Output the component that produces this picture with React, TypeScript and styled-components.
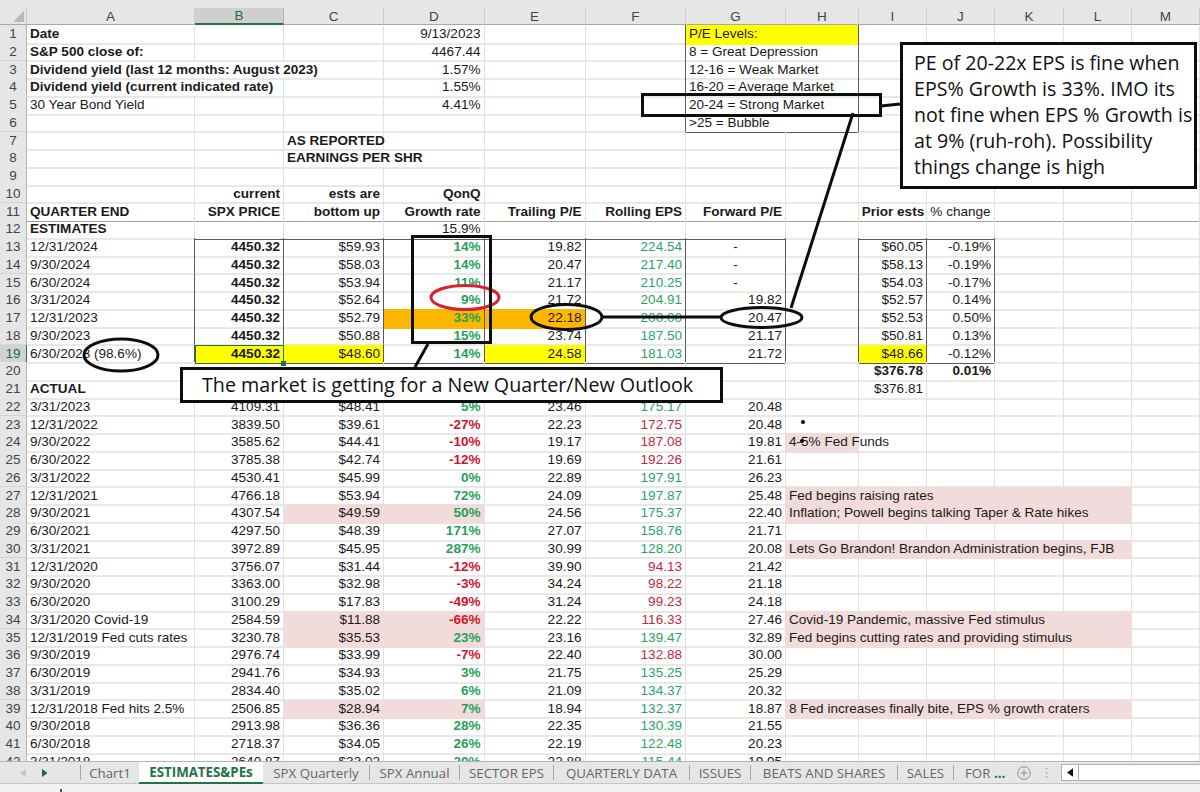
import React from "react";
import styled, { createGlobalStyle } from "styled-components";

const Global = createGlobalStyle`
  html, body { margin: 0; padding: 0; background: #fff; }
  #root { width: 1200px; height: 792px; overflow: hidden; }
`;

const COLS = "27px 168px 89px 100px 100.5px 101px 100.5px 100px 72.7px 68.3px 68px 69px 68px 68px";
const LETTERS = ["A", "B", "C", "D", "E", "F", "G", "H", "I", "J", "K", "L", "M"] as const;
type Col = (typeof LETTERS)[number];

const GREEN = "#1fa35c";
const RED = "#d0142c";
const FGREEN = "#2aa465";
const FRED = "#c42a3c";
const PINK = "#f2dcdb";
const YELLOW = "#ffff00";
const ORANGE = "#ffb600";

const Window = styled.div`
  position: relative;
  width: 1200px;
  height: 792px;
  overflow: hidden;
  display: flex;
  flex-direction: column;
  font-family: "Liberation Sans", Arial, sans-serif;
  color: #1a1a1a;
`;

const HeaderRow = styled.div`
  display: grid;
  grid-template-columns: ${COLS};
  height: 25px;
  box-sizing: border-box;
  padding-top: 8px;
  background: #e6e6e6;
  flex: none;
`;

const Corner = styled.div`
  position: relative;
  background: #e6e6e6;
  border-right: 1px solid #c8c8c8;
  border-bottom: 1px solid #a8a8a8;
  &::after {
    content: "";
    position: absolute;
    right: 2px;
    bottom: 2px;
    border-style: solid;
    border-width: 0 0 11px 11px;
    border-color: transparent transparent #b8b8b8 transparent;
  }
`;

const ColHead = styled.div<{ $selected?: boolean }>`
  display: flex;
  align-items: center;
  justify-content: center;
  font-size: 13.5px;
  box-sizing: border-box;
  color: ${(p) => (p.$selected ? "#1d6b44" : "#444")};
  background: ${(p) => (p.$selected ? "#cfcfcf" : "#e6e6e6")};
  border-right: 1px solid ${(p) => (p.$selected ? "#b0b0b0" : "#cdcdcd")};
  border-bottom: ${(p) => (p.$selected ? "2px solid #217346" : "1px solid #a8a8a8")};
`;

const Sheet = styled.div`
  flex: 1;
  min-height: 0;
  overflow: hidden;
  background: #fff;
`;

const Row = styled.div`
  display: grid;
  grid-template-columns: ${COLS};
  height: 17.75px;
  font-size: 13.55px;
  line-height: 17.5px;
`;

const RowNum = styled.div<{ $selected?: boolean }>`
  box-sizing: border-box;
  text-align: center;
  font-size: 13.5px;
  color: ${(p) => (p.$selected ? "#1d6b44" : "#444")};
  background: ${(p) => (p.$selected ? "#d2d2d2" : "#e6e6e6")};
  border-right: 1px solid ${(p) => (p.$selected ? "#217346" : "#b4b4b4")};
  border-bottom: 2px solid #d4d4d4;
`;

const Cell = styled.div<{
  $align: string;
  $bold?: boolean;
  $color?: string;
  $fill?: string;
  $span: number;
  $darkR?: boolean;
  $darkB?: boolean;
  $midB?: boolean;
  $selected?: boolean;
}>`
  position: relative;
  box-sizing: border-box;
  grid-column: span ${(p) => p.$span};
  padding: 0 3px;
  white-space: nowrap;
  min-width: 0;
  text-align: ${(p) => p.$align};
  font-weight: ${(p) => (p.$bold ? 700 : 400)};
  color: ${(p) => p.$color || "#1a1a1a"};
  background: ${(p) => p.$fill || "transparent"};
  border-right: 1px solid ${(p) => (p.$darkR ? "#5a5a5a" : p.$fill ? p.$fill : "#e0e0e0")};
  border-bottom: ${(p) =>
    p.$darkB
      ? "1px solid #5a5a5a"
      : p.$midB
      ? "1px solid #a0a0a0"
      : `2px solid ${p.$fill ? p.$fill : "#e8e8e8"}`};
  ${(p) =>
    p.$selected
      ? `outline: 1.5px solid #217346; outline-offset: -1px;
         &::after { content: ""; position: absolute; right: -3px; bottom: -3px; width: 5px; height: 5px; background: #217346; z-index: 1; }`
      : ""}
`;

const TabBar = styled.div`
  flex: none;
  height: 23px;
  box-sizing: border-box;
  display: flex;
  align-items: center;
  background: #e6e6e6;
  border-top: 1px solid #b4b4b4;
  border-bottom: 1px solid #c4c4c4;
  font-family: "Open Sans", sans-serif;
  font-size: 13.3px;
  color: #666;
`;

const TabNav = styled.div`
  width: 81px;
  flex: none;
  box-sizing: border-box;
  border-right: 1px solid #a8a8a8;
  display: flex;
  align-items: center;
  gap: 16px;
  padding-left: 20px;
  margin: 1px 0;
  height: 15px;
`;

const Tab = styled.div<{ $w: number }>`
  flex: none;
  width: ${(p) => p.$w}px;
  height: 15px;
  display: flex;
  align-items: center;
  justify-content: center;
  box-sizing: border-box;
  border-right: 1px solid #a8a8a8;
  white-space: nowrap;
`;

const ActiveTab = styled.div`
  flex: none;
  width: 124px;
  height: 22px;
  margin-left: -1px;
  display: flex;
  align-items: center;
  justify-content: center;
  box-sizing: border-box;
  background: #fff;
  color: #217346;
  font-weight: 700;
  border-bottom: 2px solid #217346;
  white-space: nowrap;
`;

const MoreTabs = styled.div`
  flex: none;
  width: 51px;
  box-sizing: border-box;
  padding-left: 11px;
  white-space: nowrap;
  & b { color: #217346; font-weight: 700; }
`;

const TabTools = styled.div`
  flex: none;
  width: 56px;
  display: flex;
  align-items: center;
  gap: 14px;
  padding-left: 12px;
  box-sizing: border-box;
`;

const ScrollTrack = styled.div`
  flex: 1;
  height: 17px;
  display: flex;
  background: #fff;
  border: 1px solid #b0b0b0;
  border-right: none;
  box-sizing: border-box;
`;

const ScrollArrow = styled.div`
  width: 16px;
  display: flex;
  align-items: center;
  justify-content: center;
  border-right: 1px solid #b0b0b0;
`;

const StatusStrip = styled.div`
  flex: none;
  height: 8px;
  background: #f2f2f2;
  overflow: hidden;
  &::before {
    content: "";
    display: block;
    width: 2px;
    height: 3px;
    margin: 5px 0 0 60px;
    background: #555;
  }
`;

/* Annotations drawn over the sheet */
const Drawn = styled.svg`
  position: absolute;
  left: 0;
  top: 0;
  width: 1200px;
  height: 792px;
  pointer-events: none;
`;

const Frame = styled.div`
  position: absolute;
  box-sizing: border-box;
  border: 3px solid #0d0d0d;
`;

const GrowthFrame = styled(Frame)`
  left: 411px;
  top: 235px;
  width: 81px;
  height: 109px;
`;

const LevelFrame = styled(Frame)`
  left: 641px;
  top: 93px;
  width: 241px;
  height: 24px;
`;

const CalloutBox = styled(Frame)`
  left: 900px;
  top: 42px;
  width: 297px;
  height: 147px;
  background: #fff;
  padding: 5px 0 0 11px;
  font-family: "Open Sans", sans-serif;
  font-size: 19.6px;
  line-height: 26px;
  color: #111;
  white-space: nowrap;
`;

const BottomBox = styled(Frame)`
  left: 180px;
  top: 367px;
  width: 543px;
  height: 36px;
  background: #fff;
  padding-left: 19px;
  font-family: "Open Sans", sans-serif;
  font-size: 19.7px;
  line-height: 29px;
  color: #111;
  white-space: nowrap;
`;

const Dot = styled.div`
  position: absolute;
  width: 4px;
  height: 4px;
  border-radius: 50%;
  background: #000;
`;

const DotTop = styled(Dot)`
  left: 801px;
  top: 420px;
`;

const DotLow = styled(Dot)`
  left: 800px;
  top: 439px;
`;

type Spec = {
  t?: string;
  a?: "left" | "right" | "center";
  b?: boolean;
  c?: string;
  f?: string;
  s?: number;
  sel?: boolean;
};
type RowSpec = Partial<Record<Col, Spec>>;

const rows: Record<number, RowSpec> = {
  1: { A: { t: "Date", b: true }, D: { t: "9/13/2023", a: "right" }, G: { t: "P/E Levels:", f: YELLOW, s: 2 } },
  2: { A: { t: "S&P 500 close of:", b: true }, D: { t: "4467.44", a: "right" }, G: { t: "8 = Great Depression", s: 2 } },
  3: { A: { t: "Dividend yield (last 12 months: August 2023)", b: true, s: 3 }, D: { t: "1.57%", a: "right" }, G: { t: "12-16 = Weak Market", s: 2 } },
  4: { A: { t: "Dividend yield (current indicated rate)", b: true, s: 2 }, D: { t: "1.55%", a: "right" }, G: { t: "16-20 = Average Market", s: 2 } },
  5: { A: { t: "30 Year Bond Yield" }, D: { t: "4.41%", a: "right" }, G: { t: "20-24 = Strong Market", s: 2 } },
  6: { G: { t: ">25 = Bubble", s: 2 } },
  7: { C: { t: "AS REPORTED", b: true } },
  8: { C: { t: "EARNINGS PER SHR", b: true, s: 2 } },
  10: { B: { t: "current", a: "right", b: true }, C: { t: "ests are", a: "right", b: true }, D: { t: "QonQ", a: "right", b: true } },
  11: {
    A: { t: "QUARTER END", b: true },
    B: { t: "SPX PRICE", a: "right", b: true },
    C: { t: "bottom up", a: "right", b: true },
    D: { t: "Growth rate", a: "right", b: true },
    E: { t: "Trailing P/E", a: "right", b: true },
    F: { t: "Rolling EPS", a: "right", b: true },
    G: { t: "Forward P/E", a: "right", b: true },
    I: { t: "Prior ests", a: "right", b: true },
    J: { t: "% change", a: "center" },
  },
  12: { A: { t: "ESTIMATES", b: true }, D: { t: "15.9%", a: "right" } },
  20: { I: { t: "$376.78", a: "right", b: true }, J: { t: "0.01%", a: "right", b: true } },
  21: { A: { t: "ACTUAL", b: true }, I: { t: "$376.81", a: "right" } },
};

const est: [number, string, string, string, string, string, string, string, string][] = [
  [13, "12/31/2024", "$59.93", "14%", "19.82", "224.54", "-", "$60.05", "-0.19%"],
  [14, "9/30/2024", "$58.03", "14%", "20.47", "217.40", "-", "$58.13", "-0.19%"],
  [15, "6/30/2024", "$53.94", "11%", "21.17", "210.25", "-", "$54.03", "-0.17%"],
  [16, "3/31/2024", "$52.64", "9%", "21.72", "204.91", "19.82", "$52.57", "0.14%"],
  [17, "12/31/2023", "$52.79", "33%", "22.18", "200.00", "20.47", "$52.53", "0.50%"],
  [18, "9/30/2023", "$50.88", "15%", "23.74", "187.50", "21.17", "$50.81", "0.13%"],
  [19, "6/30/2023 (98.6%)", "$48.60", "14%", "24.58", "181.03", "21.72", "$48.66", "-0.12%"],
];

est.forEach(([n, a, c, d, e, f, g, i, j]) => {
  rows[n] = {
    A: { t: a, s: 1 },
    B: { t: "4450.32", a: "right", b: true, f: n === 19 ? YELLOW : undefined, sel: n === 19 },
    C: { t: c, a: "right", f: n === 19 ? YELLOW : undefined },
    D: { t: d, a: "right", b: true, c: GREEN, f: n === 17 ? ORANGE : undefined },
    E: { t: e, a: "right", f: n === 17 ? ORANGE : n === 19 ? YELLOW : undefined },
    F: { t: f, a: "right", c: FGREEN },
    G: g === "-" ? { t: g, a: "center" } : { t: g, a: "right" },
    I: { t: i, a: "right", f: n === 19 ? YELLOW : undefined },
    J: { t: j, a: "right" },
  };
});

const actual: [number, string, string, string, string, string, string, string, boolean, string?][] = [
  [22, "3/31/2023", "4109.31", "$48.41", "5%", "23.46", "175.17", "20.48", false],
  [23, "12/31/2022", "3839.50", "$39.61", "-27%", "22.23", "172.75", "20.48", false],
  [24, "9/30/2022", "3585.62", "$44.41", "-10%", "19.17", "187.08", "19.81", false, "4-5% Fed Funds"],
  [25, "6/30/2022", "3785.38", "$42.74", "-12%", "19.69", "192.26", "21.61", false],
  [26, "3/31/2022", "4530.41", "$45.99", "0%", "22.89", "197.91", "26.23", false],
  [27, "12/31/2021", "4766.18", "$53.94", "72%", "24.09", "197.87", "25.48", false, "Fed begins raising rates"],
  [28, "9/30/2021", "4307.54", "$49.59", "50%", "24.56", "175.37", "22.40", true, "Inflation; Powell begins talking Taper & Rate hikes"],
  [29, "6/30/2021", "4297.50", "$48.39", "171%", "27.07", "158.76", "21.71", false],
  [30, "3/31/2021", "3972.89", "$45.95", "287%", "30.99", "128.20", "20.08", false, "Lets Go Brandon! Brandon Administration begins, FJB"],
  [31, "12/31/2020", "3756.07", "$31.44", "-12%", "39.90", "94.13", "21.42", false],
  [32, "9/30/2020", "3363.00", "$32.98", "-3%", "34.24", "98.22", "21.18", false],
  [33, "6/30/2020", "3100.29", "$17.83", "-49%", "31.24", "99.23", "24.18", false],
  [34, "3/31/2020 Covid-19", "2584.59", "$11.88", "-66%", "22.22", "116.33", "27.46", true, "Covid-19 Pandemic, massive Fed stimulus"],
  [35, "12/31/2019 Fed cuts rates", "3230.78", "$35.53", "23%", "23.16", "139.47", "32.89", true, "Fed begins cutting rates and providing stimulus"],
  [36, "9/30/2019", "2976.74", "$33.99", "-7%", "22.40", "132.88", "30.00", false],
  [37, "6/30/2019", "2941.76", "$34.93", "3%", "21.75", "135.25", "25.29", false],
  [38, "3/31/2019", "2834.40", "$35.02", "6%", "21.09", "134.37", "20.32", false],
  [39, "12/31/2018 Fed hits 2.5%", "2506.85", "$28.94", "7%", "18.94", "132.37", "18.87", true, "8 Fed increases finally bite, EPS % growth craters"],
  [40, "9/30/2018", "2913.98", "$36.36", "28%", "22.35", "130.39", "21.55", false],
  [41, "6/30/2018", "2718.37", "$34.05", "26%", "22.19", "122.48", "20.23", false],
  [42, "3/31/2018", "2640.87", "$33.02", "20%", "22.88", "115.44", "19.95", false],
];

const FRED_ROWS = [23, 24, 25, 31, 32, 33, 34, 36];

actual.forEach(([n, a, b, c, d, e, f, g, pink, note]) => {
  const spec: RowSpec = {
    A: { t: a },
    B: { t: b, a: "right" },
    C: { t: c, a: "right", f: pink ? PINK : undefined },
    D: { t: d, a: "right", b: true, c: d.startsWith("-") ? RED : GREEN, f: pink ? PINK : undefined },
    E: { t: e, a: "right" },
    F: { t: f, a: "right", c: FRED_ROWS.includes(n) ? FRED : FGREEN },
    G: { t: g, a: "right" },
  };
  if (note) spec.H = { t: note, f: PINK, s: n === 24 ? 1 : 5 };
  rows[n] = spec;
});

const inBand = (n: number, lo: number, hi: number) => n >= lo && n <= hi;

function darkRight(n: number, col: Col, span: number) {
  const end = LETTERS[LETTERS.indexOf(col) + span - 1];
  if (inBand(n, 13, 19) && ["A", "B", "C", "D", "E", "F", "G", "H", "I", "J"].includes(end)) return true;
  if (inBand(n, 1, 6) && (end === "F" || end === "H")) return true;
  return false;
}

function darkBottom(n: number, col: Col) {
  if ((n === 12 || n === 19) && ["B", "C", "D", "E", "F", "G", "I", "J"].includes(col)) return true;
  if (n === 6 && col === "G") return true;
  return false;
}

function SheetRow({ n }: { n: number }) {
  const spec = rows[n] || {};
  const cells: React.ReactNode[] = [];
  for (let i = 0; i < LETTERS.length; ) {
    const col = LETTERS[i];
    const c = spec[col] || {};
    const span = c.s || 1;
    cells.push(
      <Cell
        key={col}
        $align={c.a || "left"}
        $bold={c.b}
        $color={c.c}
        $fill={c.f}
        $span={span}
        $darkR={darkRight(n, col, span)}
        $darkB={darkBottom(n, col)}
        $midB={n === 11}
        $selected={c.sel}
      >
        {c.t}
      </Cell>
    );
    i += span;
  }
  return (
    <Row>
      <RowNum $selected={n === 19}>{n}</RowNum>
      {cells}
    </Row>
  );
}

const Triangle = ({ dir, color, size = 8 }: { dir: "l" | "r"; color: string; size?: number }) => (
  <svg width={size * 0.7} height={size} viewBox="0 0 7 10">
    <path d={dir === "l" ? "M7 0V10L0 5Z" : "M0 0V10L7 5Z"} fill={color} />
  </svg>
);

export default function App() {
  const nums = Array.from({ length: 42 }, (_, i) => i + 1);
  return (
    <Window>
      <Global />
      <HeaderRow>
        <Corner />
        {LETTERS.map((l) => (
          <ColHead key={l} $selected={l === "B"}>
            {l}
          </ColHead>
        ))}
      </HeaderRow>
      <Sheet>
        {nums.map((n) => (
          <SheetRow key={n} n={n} />
        ))}
      </Sheet>
      <TabBar>
        <TabNav>
          <Triangle dir="l" color="#c4c4c4" />
          <Triangle dir="r" color="#1d6b44" />
        </TabNav>
        <Tab $w={59}>Chart1</Tab>
        <ActiveTab>ESTIMATES&amp;PEs</ActiveTab>
        <Tab $w={107}>SPX Quarterly</Tab>
        <Tab $w={90}>SPX Annual</Tab>
        <Tab $w={94}>SECTOR EPS</Tab>
        <Tab $w={136}>QUARTERLY DATA</Tab>
        <Tab $w={61}>ISSUES</Tab>
        <Tab $w={147}>BEATS AND SHARES</Tab>
        <Tab $w={56}>SALES</Tab>
        <MoreTabs>
          FOR <b>...</b>
        </MoreTabs>
        <TabTools>
          <svg width="14" height="14" viewBox="0 0 14 14">
            <circle cx="7" cy="7" r="6.3" fill="none" stroke="#8c8c8c" />
            <path d="M7 3.5V10.5M3.5 7H10.5" stroke="#8c8c8c" />
          </svg>
          <svg width="3" height="12" viewBox="0 0 3 12">
            <path d="M1.5 1v1.5M1.5 5v1.5M1.5 9v1.5" stroke="#a8a8a8" strokeWidth="1.6" />
          </svg>
        </TabTools>
        <ScrollTrack>
          <ScrollArrow>
            <Triangle dir="l" color="#111" size={9} />
          </ScrollArrow>
        </ScrollTrack>
      </TabBar>
      <StatusStrip />

      <Drawn viewBox="0 0 1200 792">
        <g fill="none" stroke="#0d0d0d" strokeWidth="3">
          <ellipse cx="121" cy="355" rx="37" ry="16" />
          <ellipse cx="566.5" cy="317" rx="35.5" ry="12.5" />
          <ellipse cx="761.5" cy="317.5" rx="40.5" ry="10" />
          <path d="M602 317H721" />
          <path d="M791 308L853 113" />
          <path d="M881 106L900 104" />
          <path d="M428 344L415 367" />
        </g>
        <ellipse cx="465" cy="297.5" rx="34" ry="12" fill="none" stroke="#d8202e" strokeWidth="3" />
      </Drawn>
      <GrowthFrame />
      <LevelFrame />
      <CalloutBox>
        PE of 20-22x EPS is fine when
        <br />
        EPS% Growth is 33%. IMO its
        <br />
        not fine when EPS % Growth is
        <br />
        at 9% (ruh-roh). Possibility
        <br />
        things change is high
      </CalloutBox>
      <BottomBox>The market is getting for a New Quarter/New Outlook</BottomBox>
      <DotTop />
      <DotLow />
    </Window>
  );
}
